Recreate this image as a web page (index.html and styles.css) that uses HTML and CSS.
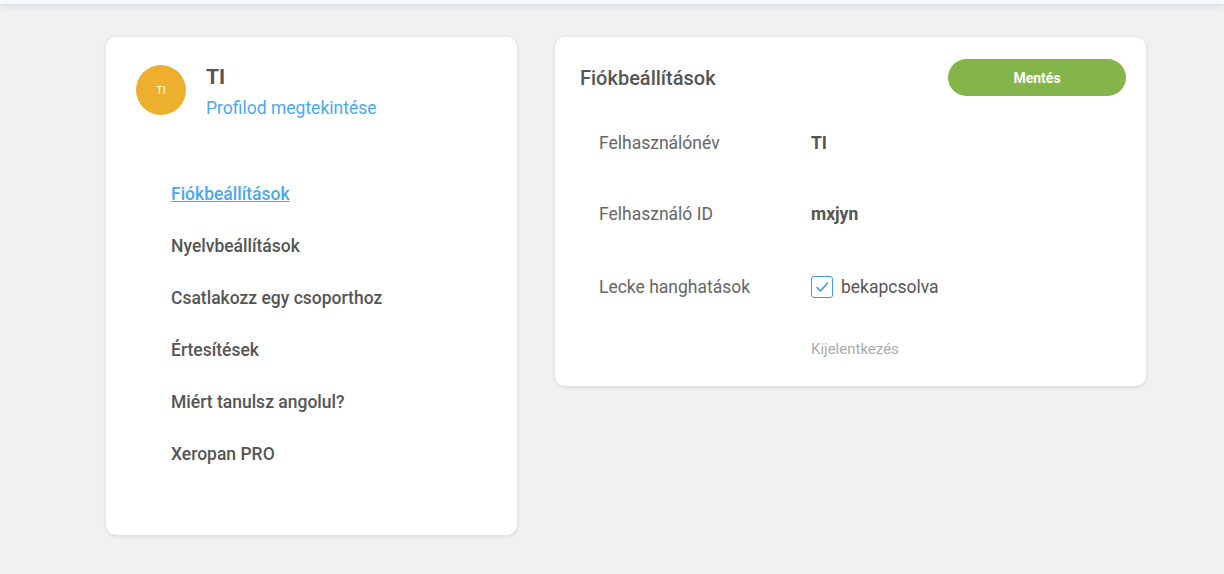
FILE: index.html
```html
<!DOCTYPE html>
<html lang="hu">
<head>
<meta charset="utf-8">
<title>Fiókbeállítások</title>
<link rel="stylesheet" href="styles.css">
</head>
<body>
<header class="topbar"></header>
<main class="layout">
  <aside class="card side">
    <div class="profile">
      <div class="avatar">TI</div>
      <div class="profile-info">
        <div class="profile-name">TI</div>
        <a class="profile-link" href="#">Profilod megtekintése</a>
      </div>
    </div>
    <nav class="menu">
      <a class="menu-item active" href="#">Fiókbeállítások</a>
      <a class="menu-item" href="#">Nyelvbeállítások</a>
      <a class="menu-item" href="#">Csatlakozz egy csoporthoz</a>
      <a class="menu-item" href="#">Értesítések</a>
      <a class="menu-item" href="#">Miért tanulsz angolul?</a>
      <a class="menu-item" href="#">Xeropan PRO</a>
    </nav>
  </aside>
  <section class="card settings">
    <div class="settings-head">
      <h1 class="settings-title">Fiókbeállítások</h1>
      <button class="save-btn">Mentés</button>
    </div>
    <div class="rows">
      <div class="row">
        <div class="label">Felhasználónév</div>
        <div class="value">TI</div>
      </div>
      <div class="row">
        <div class="label">Felhasználó ID</div>
        <div class="value">mxjyn</div>
      </div>
      <div class="row">
        <div class="label">Lecke hanghatások</div>
        <div class="value-col">
          <label class="check">
            <span class="box"><svg width="14" height="12" viewBox="0 0 14 12"><path d="M2 6.5 L5.5 10 L12.5 2" fill="none" stroke="#3a9ae8" stroke-width="1.6" stroke-linecap="round" stroke-linejoin="round"/></svg></span>
            <span class="check-text">bekapcsolva</span>
          </label>
          <a class="logout" href="#">Kijelentkezés</a>
        </div>
      </div>
    </div>
  </section>
</main>
</body>
</html>
```
FILE: styles.css
```css
* { box-sizing: border-box; }
html, body { margin: 0; padding: 0; }
body {
  background: #f1f1f1;
  font-family: Roboto, "Noto Sans", Arial, sans-serif;
  color: #555;
  height: 574px;
  overflow: hidden;
}
.topbar {
  height: 4px;
  background: #f7f8f9;
  box-shadow: 0 2px 5px rgba(120, 140, 150, 0.25);
  position: relative;
}
.layout {
  display: flex;
  align-items: flex-start;
  gap: 38px;
  margin: 33px 0 0 106px;
}
.card {
  background: #fff;
  border-radius: 10px;
  box-shadow: 0 1px 4px rgba(0, 0, 0, 0.12);
}
.side {
  width: 411px;
  height: 498px;
  padding: 28px 30px;
}
.profile {
  display: flex;
  align-items: flex-start;
  gap: 20px;
}
.avatar {
  width: 50px;
  height: 50px;
  border-radius: 50%;
  background: #ecb02e;
  color: #fff;
  font-size: 11px;
  display: flex;
  align-items: center;
  justify-content: center;
}
.profile-info {
  display: flex;
  flex-direction: column;
}
.profile-name {
  font-size: 21px;
  font-weight: 700;
  color: #555;
  line-height: 24px;
}
.profile-link {
  font-size: 17.5px;
  color: #4aa8f0;
  text-decoration: none;
  margin-top: 9px;
  line-height: 20px;
}
.menu {
  display: flex;
  flex-direction: column;
  padding-left: 35px;
  margin-top: 66px;
}
.menu-item {
  font-size: 17.5px;
  font-weight: 500;
  color: #555;
  text-decoration: none;
  line-height: 20px;
  height: 52px;
}
.menu-item.active {
  color: #4aa8f0;
  text-decoration: underline;
}
.settings {
  width: 591px;
  height: 349px;
  padding: 22px 20px 0 25px;
}
.settings-head {
  display: flex;
  justify-content: space-between;
  align-items: center;
}
.settings-title {
  margin: 0;
  font-size: 20px;
  font-weight: 500;
  color: #555;
}
.save-btn {
  width: 178px;
  height: 37px;
  border: none;
  border-radius: 19px;
  background: #84b54b;
  color: #fff;
  font-family: inherit;
  font-size: 14px;
  font-weight: 700;
  padding: 0;
}
.rows {
  padding-left: 19px;
  margin-top: 37px;
}
.row {
  display: flex;
  font-size: 17.5px;
  line-height: 20px;
}
.row:nth-child(1) { height: 71px; }
.row:nth-child(2) { height: 73px; }
.label {
  width: 212px;
  color: #666;
}
.value {
  font-weight: 700;
  color: #555;
}
.value-col {
  display: flex;
  flex-direction: column;
}
.check {
  display: flex;
  align-items: center;
  gap: 8px;
  margin-top: -1px;
}
.box {
  width: 22px;
  height: 22px;
  border: 1.5px solid #3a9ae8;
  border-radius: 3px;
  display: flex;
  align-items: center;
  justify-content: center;
}
.check-text { color: #555; }
.logout {
  margin-top: 41px;
  font-size: 15px;
  color: #aaa;
  text-decoration: none;
}
```
